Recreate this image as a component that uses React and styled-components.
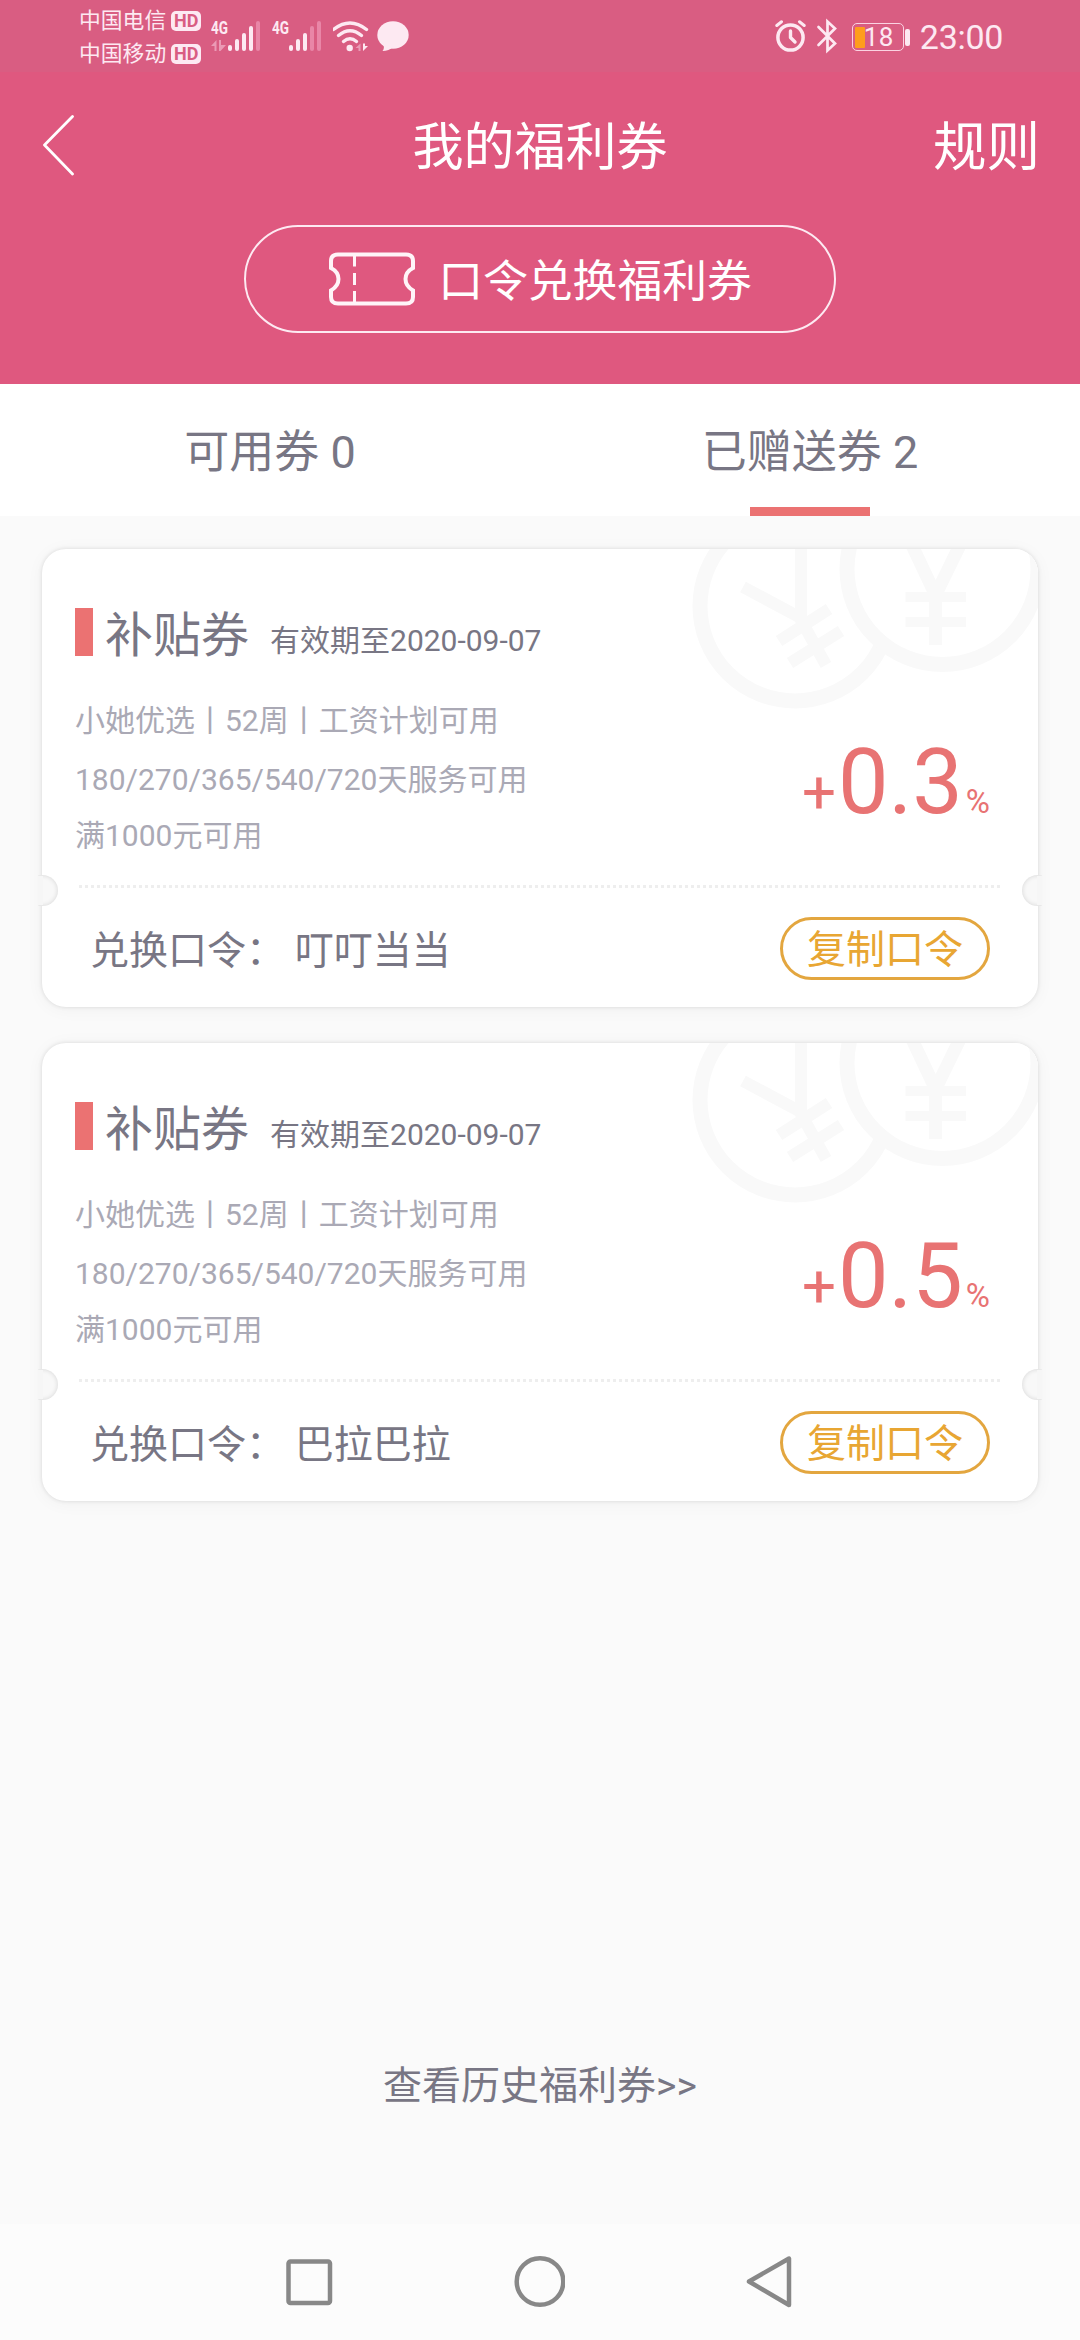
import React from "react";
import styled, { createGlobalStyle } from "styled-components";

const GlobalStyle = createGlobalStyle`
  * { box-sizing: border-box; }
  body {
    margin: 0;
    background: #fafafa;
    font-family: Roboto, "Noto Sans CJK SC", sans-serif;
    color: #787684;
  }
  button { font: inherit; background: none; border: 0; padding: 0; color: inherit; }
  svg { display: block; flex: none; }
`;

const Screen = styled.div`
  width: 1080px;
  height: 2340px;
  display: flex;
  flex-direction: column;
  background: #fafafa;
  overflow: hidden;
  white-space: nowrap;
`;

const StatusBar = styled.div`
  height: 72px;
  flex: none;
  display: flex;
  align-items: flex-start;
  justify-content: space-between;
  padding: 0 77px 0 79px;
  background: #d95d82;
  color: #fde9f2;
`;

const StatusGroup = styled.div`
  display: flex;
  align-items: flex-start;
`;

const Carriers = styled.div`
  display: flex;
  flex-direction: column;
  padding-top: 4px;
`;

const Carrier = styled.div`
  display: flex;
  align-items: center;
  gap: 5px;
  height: 33px;
  font-size: 21.8px;
  line-height: 33px;
`;

const HdBadge = styled.span`
  width: 30px;
  height: 20px;
  border-radius: 5px;
  background: #fde9f2;
  color: #d95d82;
  font-size: 18px;
  font-weight: 700;
  line-height: 20px;
  text-align: center;
`;

const SignalGroup = styled(StatusGroup)`
  margin-left: 10px;
  gap: 9px;
`;

const Clock = styled.span`
  margin-left: 10px;
  font-size: 34px;
  line-height: 74px;
  letter-spacing: -0.3px;
`;

const Battery = styled.div`
  display: flex;
  align-items: center;
  margin: 23px 0 0 14px;
`;

const BatteryBody = styled.div`
  width: 52px;
  height: 28px;
  display: flex;
  align-items: center;
  padding: 0 2px;
  border: 1.6px solid #fbd3e2;
  border-radius: 5px;
  font-size: 26px;
  line-height: 26px;
  letter-spacing: 0.3px;
`;

const BatteryLevel = styled.span`
  width: 10px;
  height: 21px;
  margin-right: -1px;
  border-radius: 1px;
  background: #ff9d1c;
`;

const BatteryTip = styled.span`
  width: 5px;
  height: 17px;
  margin-left: 1px;
  border-radius: 2px;
  background: #fde9f2;
`;

const Header = styled.header`
  height: 312px;
  flex: none;
  display: flex;
  flex-direction: column;
  align-items: center;
  background: #df587f;
  color: #fff;
`;

const TitleBar = styled.div`
  width: 100%;
  height: 153px;
  display: grid;
  grid-template-columns: 200px 1fr 200px;
  align-items: center;
  padding: 0 42px 1px;
`;

const BackIcon = styled.svg`
  margin-bottom: 4px;
`;

const Title = styled.h1`
  margin: 0;
  font-size: 51px;
  font-weight: 400;
  line-height: 60px;
  text-align: center;
`;

const RulesLink = styled.button`
  margin-right: -2px;
  font-size: 53.5px;
  line-height: 60px;
  text-align: right;
`;

const RedeemButton = styled.button`
  width: 592px;
  height: 108px;
  display: flex;
  align-items: center;
  justify-content: center;
  gap: 22px;
  border: 2px solid #fdeaf2;
  border-radius: 54px;
`;

const RedeemLabel = styled.span`
  margin-top: 5px;
  font-size: 44.8px;
  line-height: 54px;
`;

const Tabs = styled.nav`
  height: 132px;
  flex: none;
  display: grid;
  grid-template-columns: 1fr 1fr;
  background: #fff;
`;

const Tab = styled.button`
  display: flex;
  flex-direction: column;
  align-items: center;
  justify-content: space-between;
  padding-top: 39px;
  font-size: 45px;
  line-height: 60px;

  &::after {
    content: "";
    width: 120px;
    height: 9px;
    background: ${(p) => (p.$active ? "#eb7272" : "transparent")};
  }
`;

const CouponList = styled.main`
  flex: 1;
  display: flex;
  flex-direction: column;
  gap: 36px;
  padding: 33px 42px 0;
`;

const Coupon = styled.article`
  position: relative;
  height: 458px;
  display: flex;
  flex-direction: column;
  border-radius: 24px;
  background: #fff;
  box-shadow: 0 0 4px rgba(0, 0, 0, 0.12), 0 2px 18px rgba(0, 0, 0, 0.045);
`;

const Watermark = styled.svg`
  position: absolute;
  top: 0;
  right: 0;
  border-top-right-radius: 24px;
`;

const Notch = styled.span`
  position: absolute;
  top: 326px;
  ${(p) => p.$side}: -4px;
  width: 20px;
  height: 31px;
  overflow: hidden;

  &::before {
    content: "";
    position: absolute;
    top: 0;
    ${(p) => p.$side}: -11px;
    width: 31px;
    height: 31px;
    border-radius: 50%;
    background: #f8f8f8;
    box-shadow: inset 0 0 5px rgba(0, 0, 0, 0.14);
  }

  &::after {
    content: "";
    position: absolute;
    top: 1px;
    ${(p) => p.$side}: 0;
    width: 5px;
    height: 29px;
    background: #f6f6f6;
  }
`;

const CouponHead = styled.div`
  position: relative;
  display: flex;
  align-items: center;
  height: 48px;
  margin: 59px 33px 0;
`;

const Marker = styled.span`
  width: 18px;
  height: 48px;
  margin-right: 12px;
  background: #eb7272;
`;

const CouponName = styled.h2`
  margin: 8px 0 0;
  font-size: 48px;
  font-weight: 400;
  line-height: 54px;
`;

const Expiry = styled.span`
  margin: 18px 0 0 21px;
  font-size: 30px;
  line-height: 36px;
`;

const CouponBody = styled.div`
  position: relative;
  display: flex;
  justify-content: space-between;
  height: 230px;
  padding: 36px 48px 0 33px;
`;

const Terms = styled.div`
  display: flex;
  flex-direction: column;
  color: #aaa9b5;
  font-size: 30px;
`;

const Term = styled.div`
  height: 58px;
  line-height: 58px;

  &:nth-child(2) {
    line-height: 60px;
  }

  &:last-child {
    margin-top: -1px;
  }
`;

const Rate = styled.div`
  display: flex;
  align-items: baseline;
  height: 106px;
  margin-top: 38px;
  color: #e87373;
  line-height: 106px;
`;

const RateSign = styled.span`
  font-size: 60px;
`;

const RateValue = styled.span`
  font-size: 90px;
  margin-left: 2px;
`;

const RatePercent = styled.span`
  font-size: 33px;
  margin-left: 3px;
`;

const Divider = styled.div`
  height: 3px;
  margin: -1px 37px 0;
  background: repeating-linear-gradient(to right, #eeeeee 0 3px, transparent 3px 6px);
`;

const CouponFoot = styled.div`
  display: flex;
  align-items: center;
  justify-content: space-between;
  height: 63px;
  margin-top: 29px;
  padding: 0 48px;
`;

const Passcode = styled.span`
  margin-top: 5px;
  font-size: 39px;
  line-height: 48px;
  white-space: pre;
`;

const CopyButton = styled.button`
  width: 210px;
  height: 63px;
  padding-top: 4px;
  border: 3px solid #e3a63f;
  border-radius: 32px;
  color: #e8a633;
  font-size: 39px;
  line-height: 53px;
`;

const HistoryLink = styled.button`
  height: 60px;
  flex: none;
  margin-bottom: 108px;
  font-size: 39px;
  line-height: 60px;
`;

const NavBar = styled.footer`
  height: 116px;
  flex: none;
  display: flex;
  justify-content: space-between;
  padding: 28px 286px 0 282px;
  background: #fcfcfc;
`;

const SignalIcon = ({ level, data }) => {
  const bars = [45, 39, 33, 26, 21];
  return (
    <svg width="52" height="72" fill="#fde9f2">
      <text x="0" y="34" fontSize="19" fontWeight="700" textLength="17" lengthAdjust="spacingAndGlyphs">4G</text>
      {data && (
        <g fill="#eb9ab5">
          <path d="M0 46L5.5 40V51H3.5V46Z" />
          <path d="M8 40H10V45H15L9.5 51H8Z" />
        </g>
      )}
      {bars.map((top, i) => (
        <rect
          key={top}
          x={17 + i * 7}
          y={top}
          width="4"
          height={51 - top}
          rx="2"
          fill={i < level ? "#fde9f2" : "#e986a7"}
        />
      ))}
    </svg>
  );
};

const WifiIcon = () => (
  <svg width="40" height="72" fill="none" stroke="#fde9f2" strokeWidth="3.4" strokeLinecap="round">
    <g transform="translate(-2 0)">
      <path d="M2.5 29.5Q19 16.5 35.5 29.5" />
      <path d="M7.5 35.5Q19 26 30.5 35.5" />
      <path d="M12.500 41.5Q19 36 25.5 41.5" />
      <circle cx="18.7" cy="48" r="3.2" fill="#fde9f2" stroke="none" />
      <path d="M24.5 48L29.5 43.5V51H27.5V48Z" fill="#eb9ab5" stroke="none" />
      <path d="M32 43.5V51L37 46H34V43.5Z" fill="#fde9f2" stroke="none" />
    </g>
  </svg>
);

const BubbleIcon = () => (
  <svg width="36" height="72" fill="#fde9f2">
    <ellipse cx="20" cy="35" rx="15.7" ry="13.8" />
    <path d="M10 44Q12 48 9.5 51Q16 51 20 47Z" />
  </svg>
);

const AlarmIcon = () => (
  <svg width="32" height="72" fill="none" stroke="#fde9f2" strokeLinecap="round">
    <circle cx="15.5" cy="37.5" r="12.6" strokeWidth="3.5" />
    <path d="M15.5 31V37.5L20 42" strokeWidth="3.4" strokeLinejoin="round" />
    <path d="M1.8 25.5L6.5 21.8M29.2 25.5L24.5 21.8" strokeWidth="3" />
  </svg>
);

const BluetoothIcon = styled.svg`
  margin-left: 9px;
`;

const Bluetooth = () => (
  <BluetoothIcon width="22" height="72" fill="none" stroke="#fde9f2" strokeWidth="2.7" strokeLinecap="round">
    <path d="M2.5 27L19 43.5L11.5 50.5V21.5L19 28.5L2.5 45" />
  </BluetoothIcon>
);

const TicketIcon = () => (
  <svg width="88" height="56" viewBox="0 0 88 56" fill="none" stroke="#fff4f8" strokeWidth="4">
    <path d="M10 3.5H78Q85 3.5 85 10V17Q77.5 21 77.5 28Q77.5 35 85 39.5V46Q85 52.5 78 52.5H10Q3 52.5 3 46V39.5Q10.5 35 10.5 28Q10.5 21 3 17V10Q3 3.5 10 3.5Z" />
    <path d="M26.5 5V15.5M26.5 22V34M26.5 40V51" strokeWidth="3" />
  </svg>
);

const Coins = () => (
  <Watermark width="350" height="170" viewBox="688 549 350 170" fill="none" stroke="#f9f9f9">
    <circle cx="795" cy="606" r="95" strokeWidth="15" />
    <path d="M743 587L801 618M801 549V620L826 665M779 641L829 609M790 663L841 631" strokeWidth="12" />
    <circle cx="942.5" cy="569" r="95.5" strokeWidth="15" fill="#fff" />
    <path d="M910 541L935.5 595L962 541M935.5 592V645" strokeWidth="13" />
    <path d="M905.5 597H966M905.5 622H966" strokeWidth="10" />
  </Watermark>
);

const coupons = [
  { rate: "0.3", code: "叮叮当当" },
  { rate: "0.5", code: "巴拉巴拉" },
];

const CouponCard = ({ rate, code }) => (
  <Coupon>
    <Coins />
    <Notch $side="left" />
    <Notch $side="right" />
    <CouponHead>
      <Marker />
      <CouponName>补贴券</CouponName>
      <Expiry>有效期至2020-09-07</Expiry>
    </CouponHead>
    <CouponBody>
      <Terms>
        <Term>小她优选丨52周丨工资计划可用</Term>
        <Term>180/270/365/540/720天服务可用</Term>
        <Term>满1000元可用</Term>
      </Terms>
      <Rate>
        <RateSign>+</RateSign>
        <RateValue>{rate}</RateValue>
        <RatePercent>%</RatePercent>
      </Rate>
    </CouponBody>
    <Divider />
    <CouponFoot>
      <Passcode>兑换口令： {code}</Passcode>
      <CopyButton>复制口令</CopyButton>
    </CouponFoot>
  </Coupon>
);

export default function App() {
  return (
    <Screen>
      <GlobalStyle />
      <StatusBar>
        <StatusGroup>
          <Carriers>
            <Carrier>中国电信<HdBadge>HD</HdBadge></Carrier>
            <Carrier>中国移动<HdBadge>HD</HdBadge></Carrier>
          </Carriers>
          <SignalGroup>
            <SignalIcon level={4} data />
            <SignalIcon level={3} />
            <WifiIcon />
          </SignalGroup>
          <BubbleIcon />
        </StatusGroup>
        <StatusGroup>
          <AlarmIcon />
          <Bluetooth />
          <Battery>
            <BatteryBody><BatteryLevel />18</BatteryBody>
            <BatteryTip />
          </Battery>
          <Clock>23:00</Clock>
        </StatusGroup>
      </StatusBar>
      <Header>
        <TitleBar>
          <BackIcon width="34" height="62" viewBox="0 0 34 62" fill="none" stroke="#fff" strokeWidth="2.8" strokeLinecap="round" strokeLinejoin="round">
            <path d="M30.5 1.500L2.500 30L30.5 59" />
          </BackIcon>
          <Title>我的福利券</Title>
          <RulesLink>规则</RulesLink>
        </TitleBar>
        <RedeemButton>
          <TicketIcon />
          <RedeemLabel>口令兑换福利券</RedeemLabel>
        </RedeemButton>
      </Header>
      <Tabs>
        <Tab>可用券 0</Tab>
        <Tab $active>已赠送券 2</Tab>
      </Tabs>
      <CouponList>
        {coupons.map((c) => (
          <CouponCard key={c.code} {...c} />
        ))}
      </CouponList>
      <HistoryLink>查看历史福利券&gt;&gt;</HistoryLink>
      <NavBar>
        <svg width="54" height="60" fill="none" stroke="#888" strokeWidth="4.5">
          <rect x="6.5" y="9.5" width="41.5" height="41.5" rx="2" />
        </svg>
        <svg width="54" height="60" fill="none" stroke="#888" strokeWidth="4.5">
          <circle cx="29" cy="29.5" r="23.3" />
        </svg>
        <svg width="54" height="60" fill="none" stroke="#888" strokeWidth="4.5" strokeLinejoin="round">
          <path d="M49 6.5V53L9 29.5Z" />
        </svg>
      </NavBar>
    </Screen>
  );
}
